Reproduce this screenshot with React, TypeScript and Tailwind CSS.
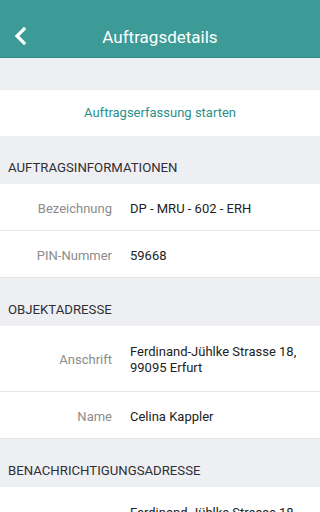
import React from "react";

interface Field {
  label: string;
  value: string[];
}

interface Section {
  title: string;
  fields: Field[];
}

const sections: Section[] = [
  {
    title: "AUFTRAGSINFORMATIONEN",
    fields: [
      { label: "Bezeichnung", value: ["DP - MRU - 602 - ERH"] },
      { label: "PIN-Nummer", value: ["59668"] },
    ],
  },
  {
    title: "OBJEKTADRESSE",
    fields: [
      {
        label: "Anschrift",
        value: ["Ferdinand-Jühlke Strasse 18,", "99095 Erfurt"],
      },
      { label: "Name", value: ["Celina Kappler"] },
    ],
  },
  {
    title: "BENACHRICHTIGUNGSADRESSE",
    fields: [
      {
        label: "Anschrift",
        value: ["Ferdinand-Jühlke Strasse 18,", "99095 Erfurt"],
      },
    ],
  },
];

function Row({ field }: { field: Field }) {
  const multi = field.value.length > 1;
  return (
    <div
      className={`flex items-center bg-white border-b border-[#e6e6e8] pt-[3px] ${
        multi ? "h-[66px]" : "h-[47px]"
      }`}
    >
      <div className="w-[112px] shrink-0 text-right text-[13px] text-[#8c8c8c]">
        {field.label}
      </div>
      <div className="pl-[18px] pr-3 text-[13px] leading-[16px] text-[#222222]">
        {field.value.map((line, i) => (
          <div key={i}>{line}</div>
        ))}
      </div>
    </div>
  );
}

export default function App() {
  return (
    <div
      className="w-[320px] h-[512px] overflow-hidden bg-[#eeeff2]"
      style={{ fontFamily: "Roboto, 'Noto Sans', sans-serif" }}
    >
      {/* header */}
      <div className="relative h-[58px] bg-[#3c9a97] border-b border-[#2f8a87] flex items-end justify-center pb-[10px]">
        <button className="absolute left-[13px] top-[27px] text-white">
          <svg width="14" height="18" viewBox="0 0 14 18">
            <path
              d="M11 2 L4 9 L11 16"
              fill="none"
              stroke="white"
              strokeWidth="3.2"
              strokeLinecap="square"
              strokeLinejoin="miter"
            />
          </svg>
        </button>
        <h1 className="text-white text-[17px] leading-[20px]">
          Auftragsdetails
        </h1>
      </div>

      <div className="h-[32px]" />

      <div className="h-[46px] bg-white flex items-center justify-center">
        <span className="text-[13px] text-[#2b8f8b]">
          Auftragserfassung starten
        </span>
      </div>

      {sections.map((section) => (
        <div key={section.title}>
          <div className="h-[48px] flex items-end pb-[8px] px-2">
            <span className="text-[13.2px] leading-[16px] text-[#2e2e36]">
              {section.title}
            </span>
          </div>
          {section.fields.map((field) => (
            <Row key={field.label} field={field} />
          ))}
        </div>
      ))}
    </div>
  );
}
